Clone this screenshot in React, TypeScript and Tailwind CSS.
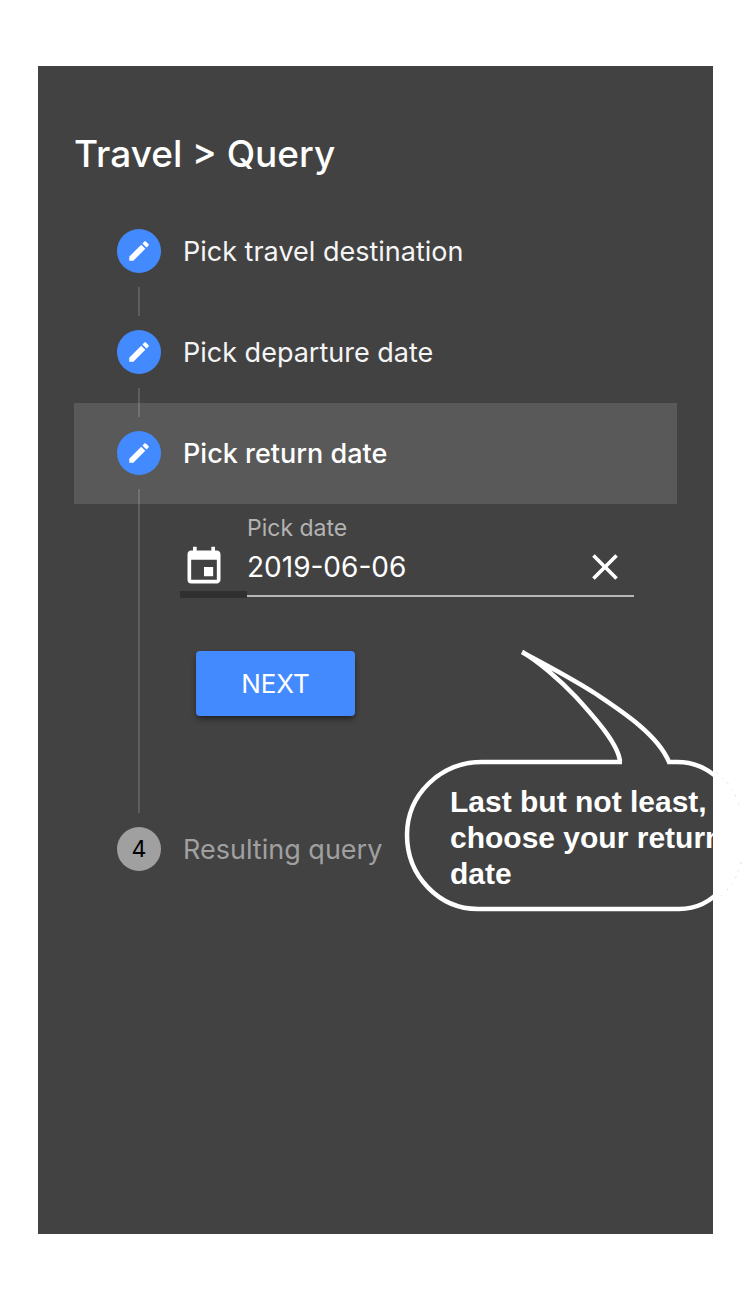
import { useState } from "react";
import { MdClose, MdEdit, MdEvent } from "react-icons/md";

type StepProps = {
  label: string;
  first?: boolean;
  last?: boolean;
  active?: boolean;
  pending?: number;
};

function Step({ label, first, last, active, pending }: StepProps) {
  return (
    <button
      type="button"
      aria-current={active ? "step" : undefined}
      className={`flex w-full items-center pl-[43px] text-left ${active ? "bg-[#595959]" : ""}`}
    >
      <span className="flex w-11 shrink-0 flex-col items-center gap-3.5">
        <span className={`h-3.5 w-0.5 ${first ? "" : "bg-white/15"}`} />
        {pending ? (
          <span className="flex size-11 items-center justify-center rounded-full bg-[#a0a0a0] text-[23px] text-black">
            {pending}
          </span>
        ) : (
          <span className="flex size-11 items-center justify-center rounded-full bg-[#448aff] text-white">
            <MdEdit size={26} aria-hidden="true" />
          </span>
        )}
        <span className={`h-[15px] w-0.5 ${last ? "" : "bg-white/15"}`} />
      </span>
      <span
        className={`ml-[22px] text-[27px] leading-8 ${
          pending ? "text-[#a0a0a0]" : active ? "font-medium text-white" : "text-[#f5f5f5]"
        }`}
      >
        {label}
      </span>
    </button>
  );
}

function SpeechBubble() {
  return (
    <aside className="pointer-events-none absolute top-[582px] left-[366px] w-[340px]">
      <svg viewBox="0 0 340 266" className="block w-full" fill="none" aria-hidden="true">
        <path
          d="M218 114H78C36 114 3 147 3 187C3 228 35 261 74 261H275C310 261 337 228 337 187C337 147 310 114 273 114H265C254 87 219 64 192 46C169 31 140 16 118 4C134 13 156 32 172 49C192 71 215 97 216 114"
          stroke="#fff"
          strokeWidth="4.5"
        />
        <path
          d="M312 124C323 132 332 144 336 160M337 214C334 230 325 242 314 250"
          stroke="#dedede"
          strokeWidth="1"
          strokeDasharray="2 7 1 5"
        />
      </svg>
      <p className="absolute top-[136px] left-[46px] w-[280px] font-['Liberation_Sans',Arial,sans-serif] text-[30px] leading-9 font-bold text-white">
        Last but not least, choose your return date
      </p>
    </aside>
  );
}

export default function App() {
  const [date, setDate] = useState("2019-06-06");

  return (
    <div className="flex min-h-screen bg-white py-[66px] pr-[37px] pl-[38px] font-[Inter,sans-serif]">
      <main className="relative min-w-0 flex-1 bg-[#424242] px-9 pt-16">
        <h1 className="mb-[23px] text-[37px] leading-[48px] font-medium text-white">
          Travel &gt; Query
        </h1>
        <ol>
          <li>
            <Step label="Pick travel destination" first />
          </li>
          <li>
            <Step label="Pick departure date" />
          </li>
          <li>
            <Step label="Pick return date" active />
            <div className="flex pr-[43px] pl-[43px]">
              <div className="flex w-11 shrink-0 justify-center">
                <span className="w-0.5 bg-white/15" />
              </div>
              <div className="ml-[19px] min-w-0 flex-1 pt-2.5 pb-[83px]">
                <div className="flex items-end">
                  <label
                    htmlFor="return-date"
                    className="flex w-[67px] shrink-0 justify-center border-b-[7px] border-[#303030] pr-[21px] pb-0.5 pl-0.5 text-white"
                  >
                    <MdEvent size={44} className="shrink-0" aria-hidden="true" />
                  </label>
                  <div className="mb-px min-w-0 flex-1 border-b-2 border-[#b8b8b8]">
                    <label
                      htmlFor="return-date"
                      className="mb-[3px] block text-[23px] leading-7 text-[#b3b3b3]"
                    >
                      Pick date
                    </label>
                    <div className="flex h-[50px] items-start pr-[7px]">
                      <input
                        id="return-date"
                        type="text"
                        value={date}
                        onChange={(e) => setDate(e.target.value)}
                        className="h-11 min-w-0 flex-1 bg-transparent text-[28px] text-white outline-none"
                      />
                      <button
                        type="button"
                        aria-label="Clear date"
                        onClick={() => setDate("")}
                        className="text-white"
                      >
                        <MdClose size={44} aria-hidden="true" />
                      </button>
                    </div>
                  </div>
                </div>
                <button
                  type="button"
                  className="mt-[53px] ml-4 block h-[65px] w-[159px] rounded bg-[#448aff] text-[26px] text-white shadow-md shadow-black/40"
                >
                  NEXT
                </button>
              </div>
            </div>
          </li>
          <li>
            <Step label="Resulting query" pending={4} last />
          </li>
        </ol>
        <SpeechBubble />
      </main>
    </div>
  );
}
